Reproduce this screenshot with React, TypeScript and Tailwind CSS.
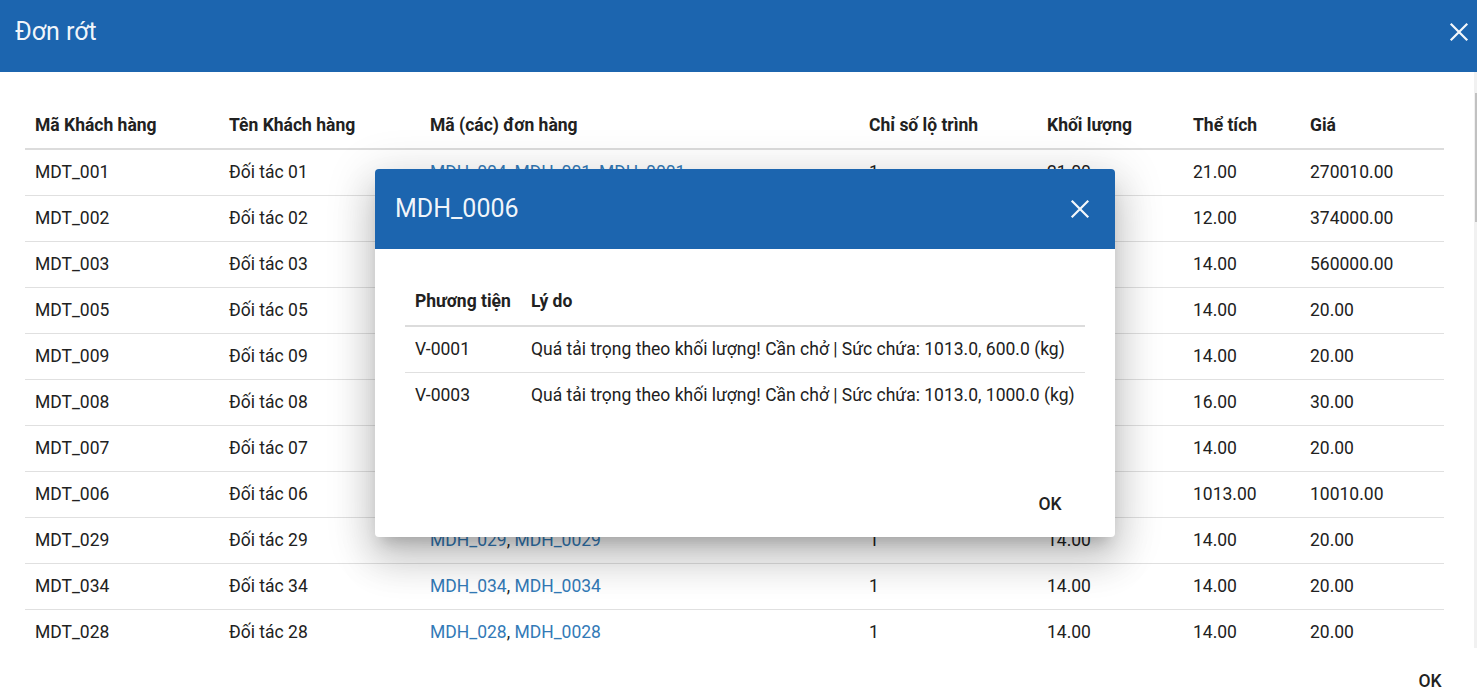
import React from "react";

type Row = {
  id: string;
  name: string;
  orders: string[];
  idx: string;
  weight: string;
  volume: string;
  price: string;
};

const rows: Row[] = [
  { id: "MDT_001", name: "Đối tác 01", orders: ["MDH_004", "MDH_001", "MDH_0001"], idx: "1", weight: "21.00", volume: "21.00", price: "270010.00" },
  { id: "MDT_002", name: "Đối tác 02", orders: ["MDH_002", "MDH_0002"], idx: "1", weight: "12.00", volume: "12.00", price: "374000.00" },
  { id: "MDT_003", name: "Đối tác 03", orders: ["MDH_003", "MDH_0003"], idx: "1", weight: "14.00", volume: "14.00", price: "560000.00" },
  { id: "MDT_005", name: "Đối tác 05", orders: ["MDH_005", "MDH_0005"], idx: "1", weight: "14.00", volume: "14.00", price: "20.00" },
  { id: "MDT_009", name: "Đối tác 09", orders: ["MDH_009", "MDH_0009"], idx: "1", weight: "14.00", volume: "14.00", price: "20.00" },
  { id: "MDT_008", name: "Đối tác 08", orders: ["MDH_008", "MDH_0008"], idx: "1", weight: "16.00", volume: "16.00", price: "30.00" },
  { id: "MDT_007", name: "Đối tác 07", orders: ["MDH_007", "MDH_0007"], idx: "1", weight: "14.00", volume: "14.00", price: "20.00" },
  { id: "MDT_006", name: "Đối tác 06", orders: ["MDH_006", "MDH_0006"], idx: "1", weight: "1013.00", volume: "1013.00", price: "10010.00" },
  { id: "MDT_029", name: "Đối tác 29", orders: ["MDH_029", "MDH_0029"], idx: "1", weight: "14.00", volume: "14.00", price: "20.00" },
  { id: "MDT_034", name: "Đối tác 34", orders: ["MDH_034", "MDH_0034"], idx: "1", weight: "14.00", volume: "14.00", price: "20.00" },
  { id: "MDT_028", name: "Đối tác 28", orders: ["MDH_028", "MDH_0028"], idx: "1", weight: "14.00", volume: "14.00", price: "20.00" },
];

function CloseIcon({ className }: { className?: string }) {
  return (
    <svg viewBox="0 0 24 24" className={className} fill="none" stroke="currentColor" strokeWidth={2.2} strokeLinecap="square">
      <path d="M4.5 4.5 L19.5 19.5 M19.5 4.5 L4.5 19.5" />
    </svg>
  );
}

export default function App() {
  return (
    <div className="relative h-[698px] w-full overflow-hidden bg-white font-['Roboto',sans-serif] text-[#212121]">
      <div className="flex h-full flex-col">
        {/* header */}
        <div className="flex h-[72px] shrink-0 items-center justify-between bg-[#1c65af] pb-[8px] pl-[15px] pr-0">
          <div className="text-[25px] text-white/95">Đơn rớt</div>
          <button className="flex h-[36px] w-[36px] items-center justify-center text-white/95">
            <CloseIcon className="h-[24px] w-[24px]" />
          </button>
        </div>

        {/* content */}
        <div className="flex h-[576px] shrink-0">
          <div className="flex-1 overflow-hidden pl-[25px] pr-[30px] pt-[31px]">
            <table className="w-full table-fixed border-collapse text-left text-[17.5px]">
              <colgroup>
                <col className="w-[194px]" />
                <col className="w-[201px]" />
                <col className="w-[439px]" />
                <col className="w-[178px]" />
                <col className="w-[146px]" />
                <col className="w-[117px]" />
                <col />
              </colgroup>
              <thead>
                <tr className="h-[46px] border-b-2 border-[#dcdcdc]">
                  <th className="px-[10px] font-bold">Mã Khách hàng</th>
                  <th className="px-[10px] font-bold">Tên Khách hàng</th>
                  <th className="px-[10px] font-bold">Mã (các) đơn hàng</th>
                  <th className="px-[10px] font-bold">Chỉ số lộ trình</th>
                  <th className="px-[10px] font-bold">Khối lượng</th>
                  <th className="px-[10px] font-bold">Thể tích</th>
                  <th className="px-[10px] font-bold">Giá</th>
                </tr>
              </thead>
              <tbody>
                {rows.map((r, i) => (
                  <tr key={r.id} className={`h-[46px] ${i < rows.length - 1 ? "border-b border-[#e0e0e0]" : ""}`}>
                    <td className="px-[10px]">{r.id}</td>
                    <td className="px-[10px]">{r.name}</td>
                    <td className="px-[10px]">
                      {r.orders.map((o, j) => (
                        <React.Fragment key={o}>
                          {j > 0 && ", "}
                          <span className="text-[#337ab7]">{o}</span>
                        </React.Fragment>
                      ))}
                    </td>
                    <td className="px-[10px]">{r.idx}</td>
                    <td className="px-[10px]">{r.weight}</td>
                    <td className="px-[10px]">{r.volume}</td>
                    <td className="px-[10px]">{r.price}</td>
                  </tr>
                ))}
              </tbody>
            </table>
          </div>
          {/* scrollbar */}
          <div className="flex w-[3px] shrink-0 flex-col items-end bg-[#f1f1f1]">
            <div className="mt-[21px] h-[129px] w-[2px] bg-[#c1c1c1]" />
          </div>
        </div>

        {/* footer */}
        <div className="flex flex-1 items-start justify-end pr-[15px]">
          <button className="mt-[16px] flex h-[34px] w-[64px] items-center justify-center text-[17.5px] font-medium text-[#212121]">
            OK
          </button>
        </div>
      </div>

      {/* inner modal */}
      <div className="absolute left-[375px] top-[169px] flex h-[368px] w-[740px] flex-col overflow-hidden rounded-[4px] bg-white shadow-[0_11px_15px_-7px_rgba(0,0,0,0.2),0_24px_38px_3px_rgba(0,0,0,0.14),0_9px_46px_8px_rgba(0,0,0,0.12)]">
        <div className="flex h-[80px] shrink-0 items-center justify-between bg-[#1c65af] pl-[20px] pr-[17px]">
          <div className="text-[25px] text-white/95">MDH_0006</div>
          <button className="flex h-[36px] w-[36px] items-center justify-center text-white/95">
            <CloseIcon className="h-[24px] w-[24px]" />
          </button>
        </div>
        <div className="flex-1 px-[30px] pt-[29px]">
          <table className="w-full table-fixed border-collapse text-left text-[17.5px]">
            <colgroup>
              <col className="w-[116px]" />
              <col />
            </colgroup>
            <thead>
              <tr className="h-[48px] border-b-2 border-[#dcdcdc]">
                <th className="px-[10px] font-bold">Phương tiện</th>
                <th className="px-[10px] font-bold">Lý do</th>
              </tr>
            </thead>
            <tbody>
              <tr className="h-[46px] border-b border-[#e0e0e0]">
                <td className="px-[10px]">V-0001</td>
                <td className="px-[10px]">Quá tải trọng theo khối lượng! Cần chở | Sức chứa: 1013.0, 600.0 (kg)</td>
              </tr>
              <tr className="h-[46px]">
                <td className="px-[10px]">V-0003</td>
                <td className="px-[10px]">Quá tải trọng theo khối lượng! Cần chở | Sức chứa: 1013.0, 1000.0 (kg)</td>
              </tr>
            </tbody>
          </table>
        </div>
        <div className="flex justify-end pb-[15px] pr-[33px]">
          <button className="flex h-[36px] w-[64px] items-center justify-center text-[17.5px] font-medium text-[#212121]">OK</button>
        </div>
      </div>
    </div>
  );
}
